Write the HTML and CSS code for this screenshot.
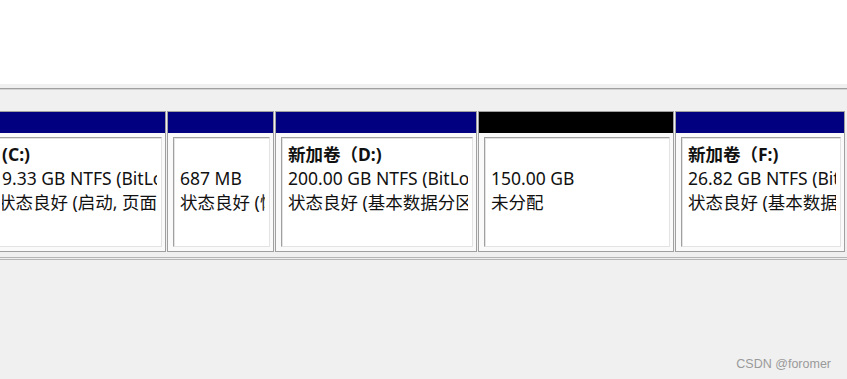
FILE: index.html
```html
<!DOCTYPE html>
<html lang="zh-CN">
<head>
  <meta charset="UTF-8">
  <meta name="viewport" content="width=device-width, initial-scale=1.0">
  <title>磁盘管理</title>
  <link rel="stylesheet" href="styles.css">
</head>
<body>
  <div class="listview"></div>
  <div class="splitter"></div>
  <div class="graph">
    <div class="disk">
      <div class="part part-c">
        <div class="bar"></div>
        <div class="body">
          <div class="box">
            <div class="line name">(C:)</div>
            <div class="line">9.33 GB NTFS (BitLocker 已加密)</div>
            <div class="line cut">状态良好 (启动, 页面文件, 故障转储, 基本数据分区)</div>
          </div>
        </div>
      </div>
      <div class="part part-r">
        <div class="bar"></div>
        <div class="body">
          <div class="box">
            <div class="line"></div>
            <div class="line">687 MB</div>
            <div class="line">状态良好 (恢复分区)</div>
          </div>
        </div>
      </div>
      <div class="part part-d">
        <div class="bar"></div>
        <div class="body">
          <div class="box">
            <div class="line name">新加卷（D:)</div>
            <div class="line">200.00 GB NTFS (BitLocker 已加密)</div>
            <div class="line">状态良好 (基本数据分区)</div>
          </div>
        </div>
      </div>
      <div class="part part-free">
        <div class="bar"></div>
        <div class="body">
          <div class="box">
            <div class="line"></div>
            <div class="line">150.00 GB</div>
            <div class="line">未分配</div>
          </div>
        </div>
      </div>
      <div class="part part-f">
        <div class="bar"></div>
        <div class="body">
          <div class="box">
            <div class="line name">新加卷（F:)</div>
            <div class="line">26.82 GB NTFS (BitLocker 已加密)</div>
            <div class="line">状态良好 (基本数据分区)</div>
          </div>
        </div>
      </div>
    </div>
    <div class="track-end"></div>
  </div>
  <div class="watermark">CSDN @foromer</div>
</body>
</html>
```

FILE: styles.css
```css
:root {
  --navy: #000080;
  --edge: #a0a0a0;
  --soft: #e3e3e3;
  --bg: #f0f0f0;
}
* { box-sizing: border-box; margin: 0; padding: 0; }
body { width: 847px; height: 379px; overflow: hidden;
  background: var(--bg); color: #111;
  font-family: "Noto Sans", "Noto Sans CJK SC", sans-serif;
  position: relative;
}
.listview { height: 84px; background: #fff; }
.splitter { height: 4px; background: var(--bg); }
.graph { border-top: 1px solid var(--edge);
  box-shadow: inset 0 1px 0 #d4d4d4;
  padding-top: 22px;
}
.disk { display: flex; gap: 1px; margin-left: -11px; }
.part { border: 1px solid var(--edge); background: #fafafa;
  display: flex; flex-direction: column;
}
.part-c { width: 177px; }
.part-r { width: 107px; }
.part-d { width: 202px; }
.part-free { width: 196px; }
.part-f { width: 170px; }
.bar { height: 21px; background: var(--navy); }
.part-free .bar { background: #000; }
.body { height: 118px; padding: 4px 3px 4px 5px; display: flex; }
.box { flex: 1; min-width: 0; background: #fff;
  border: 1px solid; border-color: var(--edge) var(--soft) var(--soft) var(--edge);
  box-shadow: inset 1px 1px 0 var(--soft);
  padding: 4px 4px 0 6px; overflow: hidden;
}
.line { height: 24px; line-height: 24px; font-size: 17.5px;
  white-space: nowrap; overflow: hidden;
}
.line.name { font-weight: bold; }
.line.cut { text-indent: -4px; }
.track-end { margin-top: 5px; height: 3px;
  border-top: 1px solid #b4b4b4; border-bottom: 1px solid #b4b4b4;
}
.watermark { position: absolute; right: 16px; bottom: 8px;
  font-family: "Liberation Sans", Arial, sans-serif; font-size: 12.5px;
  color: #9a9a9a;
}
```
